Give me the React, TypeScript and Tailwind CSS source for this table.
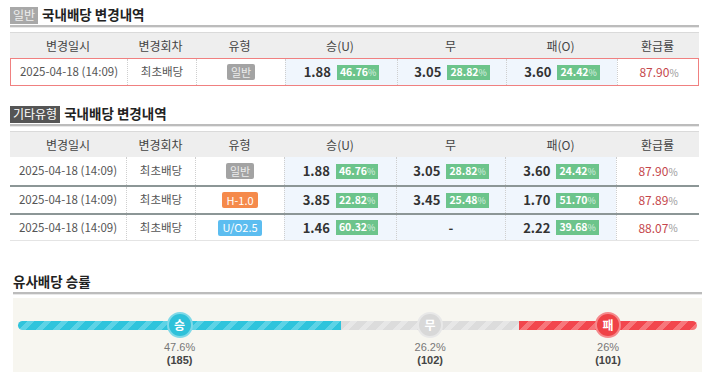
import React from 'react';

type Odd = { v: string; p?: string };
type Row = {
  date: string;
  round: string;
  type: { label: string; tone: 'gray' | 'orange' | 'blue' };
  win: Odd;
  draw: Odd;
  lose: Odd;
  rate: string;
};

const font = "font-['Noto_Sans_CJK_KR','Noto_Sans',sans-serif]";
const cols = 'grid grid-cols-[116px_69px_89px_112px_109px_111px_83px]';

const badgeTone = {
  gray: 'bg-[#a3a3a3] text-[#ececec]',
  orange: 'bg-[#f58a4b] text-white',
  blue: 'bg-[#5cbdf0] text-white',
};

const first: Row = {
  date: '2025-04-18 (14:09)',
  round: '최초배당',
  type: { label: '일반', tone: 'gray' },
  win: { v: '1.88', p: '46.76' },
  draw: { v: '3.05', p: '28.82' },
  lose: { v: '3.60', p: '24.42' },
  rate: '87.90',
};

const others: Row[] = [
  first,
  {
    date: '2025-04-18 (14:09)',
    round: '최초배당',
    type: { label: 'H-1.0', tone: 'orange' },
    win: { v: '3.85', p: '22.82' },
    draw: { v: '3.45', p: '25.48' },
    lose: { v: '1.70', p: '51.70' },
    rate: '87.89',
  },
  {
    date: '2025-04-18 (14:09)',
    round: '최초배당',
    type: { label: 'U/O2.5', tone: 'blue' },
    win: { v: '1.46', p: '60.32' },
    draw: { v: '-' },
    lose: { v: '2.22', p: '39.68' },
    rate: '88.07',
  },
];

function Title({ badge, dark, text }: { badge?: string; dark?: boolean; text: string }) {
  return (
    <div>
      <div className="flex items-center gap-[4px] h-[18px]">
        {badge && (
          <span
            className={`h-[17px] px-[3px] flex items-center text-[12px] leading-none ${
              dark ? 'bg-[#555] text-white' : 'bg-[#a8a8a8] text-[#eee]'
            }`}
          >
            {badge}
          </span>
        )}
        <span className="text-[13.5px] font-bold text-[#222] leading-none">{text}</span>
      </div>
      <div className="mt-[1px] h-[2px] bg-[#bcbcbc]" />
      <div className="h-px bg-[#e8e8e8]" />
    </div>
  );
}

function Header() {
  const heads = ['변경일시', '변경회차', '유형', '승(U)', '무', '패(O)', '환급률'];
  return (
    <div className={`${cols} h-[26px] bg-[#eeeeee] border-t border-[#dadada] text-[12px] text-[#444]`}>
      {heads.map((h) => (
        <div key={h} className="flex items-center justify-center">
          {h}
        </div>
      ))}
    </div>
  );
}

function OddCell({ o }: { o: Odd }) {
  return (
    <div className="flex items-center justify-center gap-[6px] bg-[#f0f6fd] border-l border-dotted border-[#cfcfcf]">
      <span className="text-[13px] font-bold text-[#333]">{o.v}</span>
      {o.p && (
        <span className="h-[15px] px-[3px] flex items-center bg-[#6cc48b] text-white text-[10.5px] font-bold leading-none">
          {o.p}
          <span className="text-[9px] font-normal text-[#dcefe2]">%</span>
        </span>
      )}
    </div>
  );
}

function DataRow({ r, className }: { r: Row; className: string }) {
  return (
    <div className={`${cols} h-[28px] text-[11.5px] text-[#555] ${className}`}>
      <div className="flex items-center justify-center">{r.date}</div>
      <div className="flex items-center justify-center border-l border-dotted border-[#cfcfcf]">{r.round}</div>
      <div className="flex items-center justify-center border-l border-dotted border-[#cfcfcf]">
        <span className={`h-[16px] px-[4px] flex items-center rounded-[2px] text-[11px] leading-none ${badgeTone[r.type.tone]}`}>
          {r.type.label}
        </span>
      </div>
      <OddCell o={r.win} />
      <OddCell o={r.draw} />
      <OddCell o={r.lose} />
      <div className="flex items-center justify-center border-l border-dotted border-[#cfcfcf]">
        <span className="text-[12px] text-[#c5464b]">{r.rate}</span>
        <span className="text-[10px] text-[#999]">%</span>
      </div>
    </div>
  );
}

const segs = [
  {
    w: 'w-[47.6%]',
    bar: 'rounded-l-full bg-[repeating-linear-gradient(135deg,#2fc4dc_0_7px,#5dd3e6_7px_12px)]',
    dot: 'bg-[#2ec1d9] border-[#7fd9e8]',
    label: '승',
    pct: '47.6%',
    cnt: '(185)',
  },
  {
    w: 'w-[26.2%]',
    bar: 'bg-[repeating-linear-gradient(135deg,#dcdcdc_0_7px,#e7e7e7_7px_12px)]',
    dot: 'bg-[#d8d8d8] border-[#e8e8e8]',
    label: '무',
    pct: '26.2%',
    cnt: '(102)',
  },
  {
    w: 'flex-1',
    bar: 'rounded-r-full bg-[repeating-linear-gradient(135deg,#f2464d_0_7px,#f7777b_7px_12px)]',
    dot: 'bg-[#ef4246] border-[#f58a8d]',
    label: '패',
    pct: '26%',
    cnt: '(101)',
  },
];

export default function App() {
  return (
    <div className={`${font} w-[712px] h-[380px] bg-white overflow-hidden`}>
      {/* 일반 */}
      <div className="pl-[10px] w-[699px] pt-[6px]">
        <Title badge="일반" text="국내배당 변경내역" />
        <div className="mt-[4px]">
          <Header />
          <DataRow r={first} className="border border-[#f08080]" />
        </div>
      </div>

      {/* 기타유형 */}
      <div className="pl-[10px] w-[699px] mt-[19px]">
        <Title badge="기타유형" dark text="국내배당 변경내역" />
        <div className="mt-[4px]">
          <Header />
          <DataRow r={others[0]} className="" />
          <DataRow r={others[1]} className="border-t-2 border-[#8c9696]" />
          <DataRow r={others[2]} className="border-t-2 border-b border-t-[#8c9696] border-b-[#e4e4e4]" />
        </div>
      </div>

      {/* 유사배당 승률 */}
      <div className="pl-[13px] w-[702px] mt-[32px]">
        <Title text="유사배당 승률" />
        <div className="mt-[3px] h-[74px] bg-[#f7f6f0] px-[5px] pt-[14px]">
          <div className="flex">
            {segs.map((s) => (
              <div key={s.label} className={`${s.w} flex flex-col items-center`}>
                <div className="relative w-full h-[26px] flex items-center">
                  <div className={`w-full h-[9px] ${s.bar}`} />
                  <div
                    className={`absolute left-1/2 top-0 -translate-x-1/2 w-[26px] h-[26px] rounded-full border-2 flex items-center justify-center text-white text-[12px] font-bold ${s.dot}`}
                  >
                    {s.label}
                  </div>
                </div>
                <div className="mt-[3px] font-['Liberation_Sans',Arial,sans-serif] text-[11px] leading-[13px] text-[#777]">
                  {s.pct}
                </div>
                <div className="font-['Liberation_Sans',Arial,sans-serif] text-[11px] leading-[13px] font-bold text-[#444]">
                  {s.cnt}
                </div>
              </div>
            ))}
          </div>
        </div>
      </div>
    </div>
  );
}
